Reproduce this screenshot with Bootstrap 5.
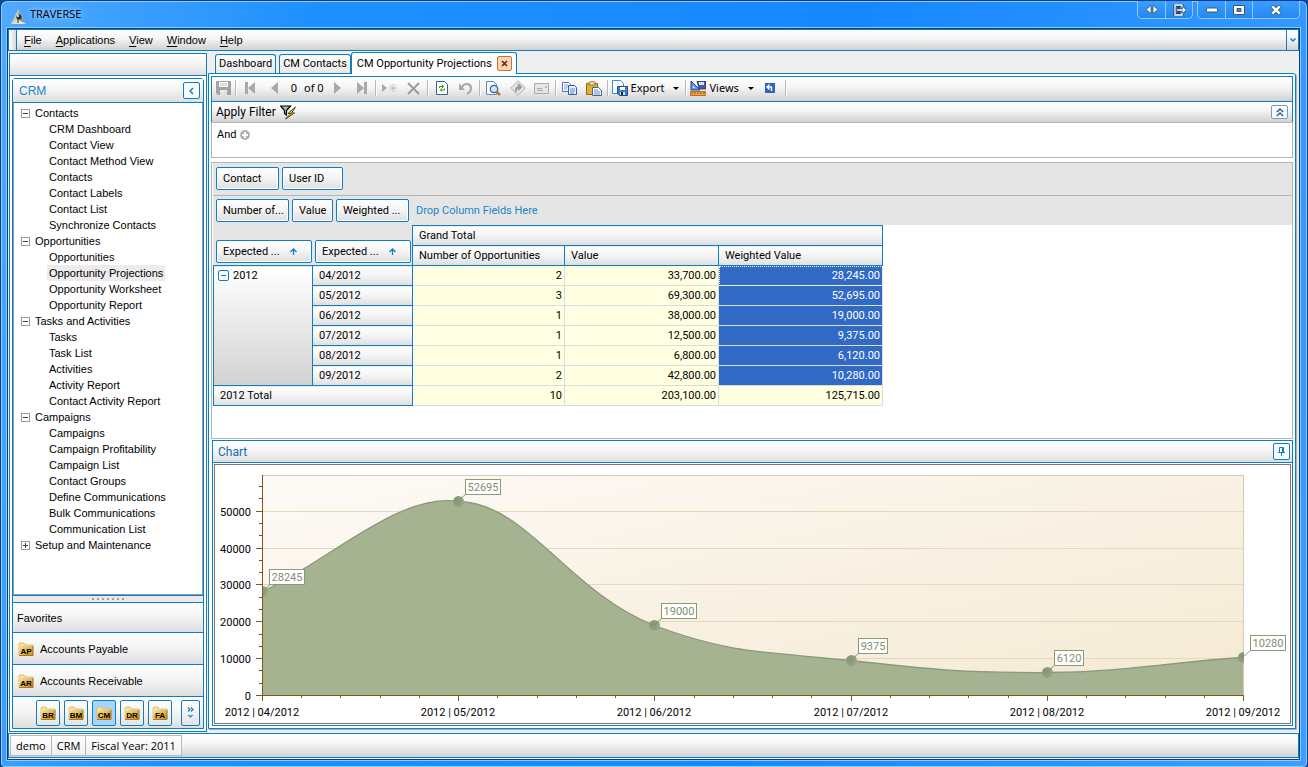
<!DOCTYPE html>
<html lang="en">
<head>
<meta charset="utf-8">
<meta name="viewport" content="width=device-width, initial-scale=1">
<title>TRAVERSE</title>
<link rel="stylesheet" href="https://cdn.jsdelivr.net/npm/bootstrap@5.3.0/dist/css/bootstrap.min.css">
<script src="https://cdn.jsdelivr.net/npm/bootstrap@5.3.0/dist/js/bootstrap.bundle.min.js"></script>
<style>
:root{--line:#0c7fc4;--soft:#b4b4b4;--grad:linear-gradient(#fff 0%,#f6f6f6 40%,#d2d2d2 100%);--grad2:linear-gradient(#fff 0%,#f5f5f5 45%,#dedede 100%)}
body{font:11px/16px Roboto,sans-serif;color:#000;background:#0b4a9a}
button,a{color:inherit;text-decoration:none;font:inherit}
button{border:0;background:none;padding:0}
svg{display:block}
.win{min-height:100vh;padding:0 7px 7px 6px;border:1px solid #0b3f88;border-radius:7px 7px 5px 5px;background:linear-gradient(100deg,#4fa9ff 0,#1e90ff 22%,#1688ff 60%,#3d9dff 100%);box-shadow:inset 0 0 0 1px #8ccaff}
.titlebar{height:27px;font:12px/26px "Open Sans",sans-serif}
.titlebar .name{text-shadow:0 0 6px #a9d6ff,0 0 8px #a9d6ff;font-size:11px}
.capgroup{height:18px;border:1px solid #8ccaff;border-top:0;border-radius:0 0 5px 5px;background:linear-gradient(#3a9dff,#2588ee)}
.capgroup button{height:17px;width:27px;display:grid;place-items:center}
.capgroup button+button{border-left:1px solid #8ccaff}
.capgroup .capclose{width:47px}
.client{background:#efefef;border:1px solid #0a3d70;padding-bottom:1px;box-shadow:0 0 0 1px #8ccaff}
.menubar{height:22px;border:1px solid var(--line);background:var(--grad);font:11px/20px "Liberation Sans",sans-serif}
.menulist{gap:14px;padding-left:7px}
.grip{width:8px;border-right:1px solid var(--line);background:linear-gradient(90deg,#fff,#d8d8d8)}
.menubar .drop{width:12px;border-left:1px solid var(--line);display:grid;place-items:center}
.menubar u{text-underline-offset:2px}
.side{width:198px;margin:2px 1px 1px;border:1px solid var(--line);background:#fff;font:11px/16px "Liberation Sans",sans-serif}
.side .strip{height:22px;border-bottom:1px solid var(--line);background:var(--grad2)}
.side-body{padding:2px}
.nav-panel{border:1px solid var(--line);border-radius:3px 3px 0 0}
.nav-head{height:24px;border-bottom:1px solid var(--line);background:var(--grad2);color:#1b86c8;font-size:12px;padding:0 3px 0 6px}
.sqbtn{width:17px;height:17px;border:1px solid var(--line);border-radius:2px;background:#f8fbfd;display:grid;place-items:center}
.sqbtn.pale{border-color:#7d9cc2;height:14px}
.tree{border:1px solid #8c9aa8;border-top:0;padding:2px 0 0 7px}
.tree ul{margin:0;padding:0;list-style:none}
.tree li>ul{padding-left:26px}
.tree li a{display:inline-block;padding:0 2px;height:16px;line-height:16px}
.tree li .group{gap:5px;height:16px}
.tree .on{background:#ececec}
.pm{width:9px;height:9px;border:1px solid #9a9a9a;display:grid;place-items:center}
.split{height:7px;gap:3px;border-top:1px solid var(--line);background:#e9e9e9}
.split i{width:2px;height:2px;background:#a4a4a4}
.navrow{border-top:1px solid var(--line);height:32px;background:var(--grad2);padding:0 5px;gap:6px;width:100%;text-align:left}
.navrow.fav{height:30px;padding-left:4px}
.navrow.mods{padding:0 3px;gap:4px}
.modbtn{width:24px;height:26px;border:1px solid var(--line);border-radius:2px;background:linear-gradient(#fff,#e4e4e4);display:grid;place-items:center}
.modbtn.on{background:#a8d4fb}
.modbtn.more{width:19px;margin-left:5px}
.docs{min-width:0;margin-right:3px}
.tabs{height:22px;padding-left:7px}
.doc-tab{height:19px;border:1px solid var(--line);border-bottom:0;border-radius:3px 3px 0 0;background:linear-gradient(#fff,#e8e8e8);padding:0 3px;margin-right:3px}
.doc-tab.wide{margin-right:0}
.doc-tab.on{height:22px;margin-bottom:-1px;background:#fff;position:relative;padding:0 4px 0 5px;gap:5px}
.closex{width:15px;height:15px;border:1px solid #c8733a;border-radius:2px;background:#fbd3b4;display:grid;place-items:center}
.docbox{border:1px solid var(--line);border-radius:0 3px 0 0;background:#fff;padding:2px;box-shadow:1px 1px 1px #aaa}
.tools{height:25px;border:1px solid var(--line);border-bottom:0;padding-bottom:2px;background:var(--grad);font:12px/22px "Noto Sans",sans-serif}
.ib{width:24px;height:22px;display:grid;place-items:center}
.ib.narrow{width:22px}
.vr2{width:2px;height:16px;margin:0 1px;border-left:1px solid #b8b8b8;border-right:1px solid #fff}
.rec{width:16px;border:0;background:none;padding:0;text-align:center;font-size:11px}
.rectotal{font-size:11px;padding:0 2px}
.wbtn{height:22px;font-size:11px;gap:3px;padding:0 2px}
.wbtn .caret{margin:0 3px 0 6px}
.filterbar{height:21px;border:1px solid var(--line);border-bottom:0;background:var(--grad);font:12px/19px Roboto,sans-serif;padding:0 4px}
.filterbox{height:36px;border:1px solid var(--soft);padding:4px 5px;background:#fff}
.pivot{border:1px solid var(--soft);margin-top:4px;background:#fff;min-height:277px;padding-left:1px}
.zone{background:#e5e5e5;height:32px;padding:4px 3px 0;gap:3px}
.zone.filters{border-bottom:1px solid var(--soft);height:33px}
.zone.cols{height:29px;padding-top:3px}
.fld{height:23px;border:1px solid var(--line);border-radius:2px;background:var(--grad2);box-shadow:inset 0 0 0 1px #fff;padding:0 6px;text-align:left;white-space:nowrap}
.w-a{width:63px}.w-b{width:61px}.w-c{width:73px}.w-d{width:41px}.w-e{width:96px}
.drophint{color:#1b86c8;line-height:23px;padding-left:4px}
.pv{width:670px;table-layout:fixed;border-collapse:collapse;line-height:19px}
.pv th,.pv td{height:20px;padding:0 2px;border:1px solid #dcdce0}
.pv th{font-weight:400;border-color:var(--line);background:var(--grad2);padding:0 6px;text-align:left}
.pv th.zonecell{background:#e5e5e5;border-color:#e5e5e5 var(--line) var(--line) #e5e5e5;padding:0 0 2px 2px;vertical-align:bottom}
.pv th.yr{vertical-align:top;background:linear-gradient(#fff,#d2d2d2);padding-left:4px}
.pv td{background:#ffffe1;text-align:right}
.pv td.sel{background:#316ac5;color:#fff}
.pv td.focus{outline:1px dotted #fff;outline-offset:-1px}
.pv .pm{border-color:var(--line);border-radius:2px;width:11px;height:11px}
.pair{gap:3px}
.pair .fld{gap:10px}
.chartpanel{border:1px solid var(--line);margin:1px 0 0 1px;padding:1px;background:#fff}
.charthead{height:22px;border-bottom:1px solid var(--line);background:var(--grad2);color:#0f6fb4;margin:-1px -1px 1px;padding:0 2px 0 5px;font-size:12px}
.chartframe{border:1px solid #8a7468}
.chartframe svg{width:100%;height:auto}
.status{height:25px;border:1px solid var(--line);background:var(--grad);padding:1px;font:11px/20px "Open Sans",sans-serif}
.status span{border:1px solid #b8b8b8;background:linear-gradient(#fff,#eee);padding:0 5px;height:21px;margin-right:-1px;line-height:19px}
</style>
</head>
<body>
<svg width="0" height="0" class="position-absolute" aria-hidden="true">
<defs>
<linearGradient id="gold" x1="0" y1="0" x2="1" y2="1"><stop offset="0" stop-color="#fbe48c"/><stop offset="1" stop-color="#c98a18"/></linearGradient>
<radialGradient id="dot" cx=".35" cy=".4" r=".7"><stop offset="0" stop-color="#83926f"/><stop offset="1" stop-color="#9aa888"/></radialGradient>
<symbol id="folder" viewBox="0 0 16 14"><path d="M1 4V2l1-1h4l1 2h8v10H1z" fill="#f2e2a6" stroke="#c8a850" stroke-width=".6"/><rect x="1" y="4" width="14" height="9.500" fill="url(#gold)"/><path d="M15 4v9.500H1" fill="none" stroke="#9a6a14" stroke-width=".8"/></symbol>
</defs>
</svg>
<div class="win d-flex flex-column">
  <header class="titlebar d-flex align-items-start">
    <div class="d-flex align-items-center ps-1">
      <svg class="me-1 mt-1" width="15" height="15" viewBox="0 0 15 15"><path d="M7.500 0 15 15H0z" fill="#c9cdc6"/><path d="M7.500 0 15 15 8 11z" fill="#8b968f"/><path d="M0 15l7-4.500L15 15z" fill="#e2e0d2"/><circle cx="8" cy="8" r="2.600" fill="#2b333c"/><circle cx="7" cy="7" r="1" fill="#fff"/><path d="M7 10v4" stroke="#333"/></svg>
      <span class="name">TRAVERSE</span>
    </div>
    <div class="d-flex ms-auto gap-1">
      <div class="capgroup d-flex">
        <button aria-label="Switch"><svg width="14" height="9" viewBox="0 0 14 9"><path d="M6 .5v8L1 4.500zM8 .5v8l5-4z" fill="#fff" stroke="#456" stroke-width=".8"/></svg></button>
        <button aria-label="Exit"><svg width="13" height="12" viewBox="0 0 13 12"><path d="M9 3V1H2v10h7V9M4 4h3M4 6h8M4 8h3M10 4l2 2-2 2" fill="none" stroke="#345" stroke-width="3"/><path d="M9 3V1H2v10h7V9M4 6h8M10 4l2 2-2 2" fill="none" stroke="#fff" stroke-width="1.300"/></svg></button>
      </div>
      <div class="capgroup d-flex">
        <button aria-label="Minimize"><svg width="12" height="6" viewBox="0 0 12 6"><rect x=".5" y="1" width="11" height="4" rx="1" fill="#fff" stroke="#456"/></svg></button>
        <button aria-label="Maximize"><svg width="12" height="10" viewBox="0 0 12 10"><path fill-rule="evenodd" d="M.5.500h11v9H.5zM4 3.500h4v3H4z" fill="#fff" stroke="#456"/></svg></button>
        <button class="capclose" aria-label="Close"><svg width="12" height="10" viewBox="0 0 12 10"><path d="M2 1l8 8M10 1L2 9" stroke="#456" stroke-width="4"/><path d="M2.300 1.300l7.400 7.400M9.700 1.300L2.300 8.700" stroke="#fff" stroke-width="2.400"/></svg></button>
      </div>
    </div>
  </header>

  <div class="client d-flex flex-column flex-grow-1">
    <nav class="menubar d-flex">
      <div class="grip"></div>
      <div class="menulist d-flex flex-grow-1">
        <a href="#"><u>F</u>ile</a><a href="#"><u>A</u>pplications</a><a href="#"><u>V</u>iew</a><a href="#"><u>W</u>indow</a><a href="#"><u>H</u>elp</a>
      </div>
      <button class="drop" aria-label="Toolbar options"><svg width="6" height="4" viewBox="0 0 6 4"><path d="M.5.500 3 3 5.500.500" fill="none" stroke="#0c7fc4" stroke-width="1.400"/></svg></button>
    </nav>

    <div class="d-flex flex-grow-1">
      <aside class="side d-flex flex-column flex-shrink-0">
        <div class="strip"></div>
        <div class="side-body d-flex flex-column flex-grow-1">
        <div class="nav-panel d-flex flex-column flex-grow-1">
          <div class="nav-head d-flex align-items-center justify-content-between">CRM
            <button class="sqbtn" aria-label="Collapse"><svg width="5" height="8" viewBox="0 0 5 8"><path d="M4 1 1 4l3 3" fill="none" stroke="#0c7fc4" stroke-width="1.500"/></svg></button>
          </div>
          <div class="tree flex-grow-1">
            <ul>
              <li><div class="group d-flex align-items-center"><button class="pm" aria-label="Collapse"><svg width="5" height="1"><rect width="5" height="1" fill="#345"/></svg></button>Contacts</div>
                <ul><li><a href="#">CRM Dashboard</a></li><li><a href="#">Contact View</a></li><li><a href="#">Contact Method View</a></li><li><a href="#">Contacts</a></li><li><a href="#">Contact Labels</a></li><li><a href="#">Contact List</a></li><li><a href="#">Synchronize Contacts</a></li></ul></li>
              <li><div class="group d-flex align-items-center"><button class="pm" aria-label="Collapse"><svg width="5" height="1"><rect width="5" height="1" fill="#345"/></svg></button>Opportunities</div>
                <ul><li><a href="#">Opportunities</a></li><li><a href="#" class="on">Opportunity Projections</a></li><li><a href="#">Opportunity Worksheet</a></li><li><a href="#">Opportunity Report</a></li></ul></li>
              <li><div class="group d-flex align-items-center"><button class="pm" aria-label="Collapse"><svg width="5" height="1"><rect width="5" height="1" fill="#345"/></svg></button>Tasks and Activities</div>
                <ul><li><a href="#">Tasks</a></li><li><a href="#">Task List</a></li><li><a href="#">Activities</a></li><li><a href="#">Activity Report</a></li><li><a href="#">Contact Activity Report</a></li></ul></li>
              <li><div class="group d-flex align-items-center"><button class="pm" aria-label="Collapse"><svg width="5" height="1"><rect width="5" height="1" fill="#345"/></svg></button>Campaigns</div>
                <ul><li><a href="#">Campaigns</a></li><li><a href="#">Campaign Profitability</a></li><li><a href="#">Campaign List</a></li><li><a href="#">Contact Groups</a></li><li><a href="#">Define Communications</a></li><li><a href="#">Bulk Communications</a></li><li><a href="#">Communication List</a></li></ul></li>
              <li><div class="group d-flex align-items-center"><button class="pm" aria-label="Expand"><svg width="5" height="5"><path d="M0 2h5v1H0zM2 0h1v5H2z" fill="#345"/></svg></button>Setup and Maintenance</div></li>
            </ul>
          </div>
          <div class="split d-flex justify-content-center align-items-center"><i></i><i></i><i></i><i></i><i></i><i></i><i></i></div>
          <button class="navrow fav d-flex align-items-center">Favorites</button>
          <button class="navrow d-flex align-items-center"><svg width="16" height="14"><use href="#folder"/><text x="8" y="12" text-anchor="middle" font-family="Liberation Sans" font-weight="700" font-size="8">AP</text></svg>Accounts Payable</button>
          <button class="navrow d-flex align-items-center"><svg width="16" height="14"><use href="#folder"/><text x="8" y="12" text-anchor="middle" font-family="Liberation Sans" font-weight="700" font-size="8">AR</text></svg>Accounts Receivable</button>
          <div class="navrow mods d-flex align-items-center justify-content-end">
            <button class="modbtn"><svg width="16" height="14"><use href="#folder"/><text x="8" y="12" text-anchor="middle" font-family="Liberation Sans" font-weight="700" font-size="8">BR</text></svg></button>
            <button class="modbtn"><svg width="16" height="14"><use href="#folder"/><text x="8" y="12" text-anchor="middle" font-family="Liberation Sans" font-weight="700" font-size="8">BM</text></svg></button>
            <button class="modbtn on"><svg width="16" height="14"><use href="#folder"/><text x="8" y="12" text-anchor="middle" font-family="Liberation Sans" font-weight="700" font-size="8">CM</text></svg></button>
            <button class="modbtn"><svg width="16" height="14"><use href="#folder"/><text x="8" y="12" text-anchor="middle" font-family="Liberation Sans" font-weight="700" font-size="8">DR</text></svg></button>
            <button class="modbtn"><svg width="16" height="14"><use href="#folder"/><text x="8" y="12" text-anchor="middle" font-family="Liberation Sans" font-weight="700" font-size="8">FA</text></svg></button>
            <button class="modbtn more" aria-label="More"><svg width="7" height="12" viewBox="0 0 7 12"><path d="M1 .5l2 2-2 2M4 .5l2 2-2 2M1.500 8l2 2 2-2" fill="none" stroke="#0c7fc4" stroke-width="1.200"/></svg></button>
          </div>
        </div>
        </div>
      </aside>

      <main class="docs d-flex flex-column flex-grow-1">
        <div class="tabs d-flex align-items-end">
          <button class="doc-tab">Dashboard</button><button class="doc-tab wide">CM Contacts</button>
          <div class="doc-tab on d-flex align-items-center"><span>CM Opportunity Projections</span><button class="closex" aria-label="Close tab"><svg width="7" height="7" viewBox="0 0 7 7"><path d="M1 1l5 5M6 1 1 6" stroke="#5a2a10" stroke-width="1.600"/></svg></button></div>
        </div>
        <div class="docbox d-flex flex-column flex-grow-1 mb-1">
          <div class="tools d-flex align-items-center">
            <button class="ib narrow" aria-label="Save"><svg width="15" height="14" viewBox="0 0 15 14"><path fill-rule="evenodd" d="M0 0h15v14H2L0 12zM3 1v5h9V1zM4 9v5h7V9z" fill="#a3a3a3"/><path d="M4 2h7v3H4zM8 10h2v3H8z" fill="#ddd"/></svg></button>
            <span class="vr2"></span>
            <button class="ib" aria-label="First"><svg width="10" height="12"><path d="M0 0h3v12H0zM10 0v12L3 6z" fill="#a9a9a9"/></svg></button>
            <button class="ib" aria-label="Previous"><svg width="7" height="12"><path d="M7 0v12L0 6z" fill="#a9a9a9"/></svg></button>
            <input class="rec" value="0" aria-label="Record"><span class="rectotal">of 0</span>
            <button class="ib" aria-label="Next"><svg width="7" height="12"><path d="M0 0v12l7-6z" fill="#a9a9a9"/></svg></button>
            <button class="ib" aria-label="Last"><svg width="10" height="12"><path d="M7 0h3v12H7zM0 0v12l7-6z" fill="#a9a9a9"/></svg></button>
            <span class="vr2"></span>
            <button class="ib" aria-label="New"><svg width="15" height="10" viewBox="0 0 15 10"><path d="M0 1v8l5-4z" fill="#a9a9a9"/><path d="M7 5h8M11 1v8M8 2l6 6M14 2 8 8" stroke="#b5b5b5" stroke-dasharray="1.500 .7"/></svg></button>
            <button class="ib" aria-label="Delete"><svg width="13" height="13"><path d="M1 1l11 11M12 1 1 12" stroke="#9c9c9c" stroke-width="2"/></svg></button>
            <span class="vr2"></span>
            <button class="ib" aria-label="Refresh"><svg width="12" height="14" viewBox="0 0 12 14"><path d="M.5.500h8l3 3v10H.5z" fill="#fff" stroke="#3f5f8f"/><path d="M3.500 7V5.500h4M8.500 7.500V9h-4M6 4l1.700 1.500L6 7M6 7.500 4.300 9 6 10.500" fill="none" stroke="#3e8e20"/></svg></button>
            <button class="ib" aria-label="Undo"><svg width="13" height="13" viewBox="0 0 13 13"><path d="M3 5c3-5 9-3 9 1 0 3-2 5-4 6" fill="none" stroke="#aaa" stroke-width="2.200"/><path d="M0 1v7h6z" fill="#aaa"/></svg></button>
            <span class="vr2"></span>
            <button class="ib" aria-label="Preview"><svg width="15" height="15" viewBox="0 0 15 15"><path d="M.5.500h7l3 3v10H.5z" fill="#fff" stroke="#6a86ae"/><circle cx="8" cy="8" r="3.700" fill="#cfe5fa" stroke="#2f5f9f" stroke-width="1.300"/><path d="M10.500 10.500 14 14" stroke="#b87a2a" stroke-width="2.500"/></svg></button>
            <button class="ib" aria-label="Go"><svg width="16" height="16" viewBox="0 0 16 16"><path d="M8 .7 15.300 8 8 15.300.7 8z" fill="#e4e4e4" stroke="#b0b0b0"/><path d="M6 12c-1-4 1-5 4-5M8 4l3 3-3 3" fill="none" stroke="#999" stroke-width="1.800"/></svg></button>
            <button class="ib" aria-label="Mail"><svg width="15" height="11"><path d="M.5.500h14v10H.5z" fill="#e6e6e6" stroke="#aaa"/><path d="M3 5.500h5M3 7.500h6M11.500 3.500h1v1h-1z" stroke="#aaa" fill="none"/></svg></button>
            <span class="vr2"></span>
            <button class="ib" aria-label="Copy"><svg width="15" height="13" viewBox="0 0 15 13"><path d="M.5.500h6l2 2v7h-8z" fill="#fff" stroke="#4a78c0"/><path d="M2 3h4M2 5h4M2 7h3" stroke="#7ba3dc"/><path d="M6.500 3.500h6l2 2v7h-8z" fill="#e8f2ff" stroke="#2d5cab"/><path d="M8 7h5M8 9h5M8 11h4" stroke="#5b8ad0"/></svg></button>
            <button class="ib" aria-label="Paste"><svg width="16" height="15" viewBox="0 0 16 15"><path d="M.5 2.500h11v11H.5z" fill="#e0ae3c" stroke="#91681a"/><path d="M3 1h2l1-1 1 1h2v3H3z" fill="#f4e39a" stroke="#91681a" stroke-width=".8"/><path d="M6.500 6.500h6l3 3v5h-9z" fill="#f4f8ff" stroke="#4d6588"/><path d="M8 9h4M8 11h6M8 13h6" stroke="#6d8fc0"/></svg></button>
            <span class="vr2"></span>
            <button class="wbtn d-flex align-items-center"><svg width="16" height="16" viewBox="0 0 16 16"><path d="M.5.500h8l3 3v10H.5z" fill="#fff" stroke="#3c8ad8"/><path d="M5.500 6.500h10v9h-8l-2-2z" fill="#3d7fc6" stroke="#1c4f8c"/><path d="M8 7h5v3H8z" fill="#fff"/><path d="M8 12h5v3H8z" fill="#dde"/><path d="M9 12h2v3H9z" fill="#223"/></svg>Export<svg class="caret" width="6" height="3"><path d="M0 0h6L3 3z"/></svg></button>
            <span class="vr2"></span>
            <button class="wbtn d-flex align-items-center"><svg width="16" height="15" viewBox="0 0 16 15"><path d="M1 0v9h9z" fill="#5f96e8" stroke="#1c3f9c"/><path d="M3 5v2h2z" fill="#fff"/><path d="M7 0h9v8H9z" fill="#4a55a0" stroke="#2b347a" stroke-width=".8"/><path d="M9 1h5v3H9z" fill="#d8e0ff"/><path d="M0 10.500h16v4H0z" fill="#f3a33a" stroke="#a6601a" stroke-width=".8"/><path d="M2 11v2M5 11v2M8 11v2M11 11v2M14 11v2" stroke="#7a4510" stroke-width=".8"/></svg>Views<svg class="caret" width="6" height="3"><path d="M0 0h6L3 3z"/></svg></button>
            <button class="ib narrow" aria-label="Reset view"><svg width="10" height="10" viewBox="0 0 10 10"><path d="M0 0h10v10H0z" fill="#2c64c8"/><path d="M2 4h4.500v4M4.500 1.500 2 4l2.500 2.500" fill="none" stroke="#fff" stroke-width="1.400"/></svg></button>
            <span class="vr2 ms-1"></span>
          </div>
          <div class="filterbar d-flex align-items-center justify-content-between">
            <div class="d-flex align-items-center gap-1">Apply Filter <svg width="17" height="15" viewBox="0 0 17 15"><path d="M.5 1h10L6.500 5.500V10l-2-1.500v-3z" fill="#9fb8b8" stroke="#000" stroke-width="1.200"/><path d="M15.500 2 8 8.500h3L5.500 14l9-6h-3z" fill="#f5e423" stroke="#3a3300" stroke-width=".9"/></svg></div>
            <button class="sqbtn pale" aria-label="Collapse filter"><svg width="8" height="9" viewBox="0 0 8 9"><path d="M.8 4 4 1l3.200 3M.8 8 4 5l3.200 3" fill="none" stroke="#35608f" stroke-width="1.500"/></svg></button>
          </div>
          <div class="filterbox"><div class="d-flex align-items-center gap-1"><a href="#">And</a>
            <button aria-label="Add condition"><svg width="10" height="10" viewBox="0 0 10 10"><circle cx="5" cy="5" r="5" fill="#b2b2b2"/><path d="M5 2v6M2 5h6" stroke="#fff" stroke-width="2"/></svg></button></div>
          </div>

          <section class="pivot">
            <div class="zone filters d-flex"><button class="fld w-a">Contact</button><button class="fld w-b">User ID</button></div>
            <div class="zone cols d-flex"><button class="fld w-c">Number of...</button><button class="fld w-d">Value</button><button class="fld w-c">Weighted ...</button><span class="drophint">Drop Column Fields Here</span></div>
            <table class="pv">
              <colgroup><col style="width:99px"><col style="width:100px"><col style="width:152px"><col style="width:154px"><col style="width:164px"></colgroup>
              <thead>
              <tr><th class="zonecell" rowspan="2" colspan="2"><div class="pair d-flex">
                <button class="fld w-e d-flex align-items-center">Expected ... <svg width="7" height="7" viewBox="0 0 7 7"><path d="M3.500 7V1M.5 4l3-3 3 3" fill="none" stroke="#0c7fc4" stroke-width="1.300"/></svg></button>
                <button class="fld w-e d-flex align-items-center">Expected ... <svg width="7" height="7" viewBox="0 0 7 7"><path d="M3.500 7V1M.5 4l3-3 3 3" fill="none" stroke="#0c7fc4" stroke-width="1.300"/></svg></button></div></th>
                <th colspan="3">Grand Total</th></tr>
              <tr><th>Number of Opportunities</th><th>Value</th><th>Weighted Value</th></tr>
              </thead>
              <tbody>
              <tr><th class="yr" rowspan="6"><div class="d-flex align-items-center gap-1"><button class="pm" aria-label="Collapse"><svg width="5" height="1"><rect width="5" height="1" fill="#0c7fc4"/></svg></button>2012</div></th><th>04/2012</th><td>2</td><td>33,700.00</td><td class="sel focus">28,245.00</td></tr>
              <tr><th>05/2012</th><td>3</td><td>69,300.00</td><td class="sel">52,695.00</td></tr>
              <tr><th>06/2012</th><td>1</td><td>38,000.00</td><td class="sel">19,000.00</td></tr>
              <tr><th>07/2012</th><td>1</td><td>12,500.00</td><td class="sel">9,375.00</td></tr>
              <tr><th>08/2012</th><td>1</td><td>6,800.00</td><td class="sel">6,120.00</td></tr>
              <tr><th>09/2012</th><td>2</td><td>42,800.00</td><td class="sel">10,280.00</td></tr>
              <tr><th colspan="2">2012 Total</th><td>10</td><td>203,100.00</td><td>125,715.00</td></tr>
              </tbody>
            </table>
          </section>

          <section class="chartpanel">
            <div class="charthead d-flex align-items-center justify-content-between">Chart
              <button class="sqbtn" aria-label="Pin"><svg width="7" height="9" viewBox="0 0 7 9"><path d="M1.500.500h4v5h-4zM0 5.500h7M3.500 6v3M4.500 1v4" fill="none" stroke="#0c7fc4"/></svg></button>
            </div>
            <div class="chartframe">
              <svg viewBox="0 0 1075 258" font-family="Roboto, sans-serif" font-size="11" role="img" aria-label="Weighted value by month">
                <defs>
                  <linearGradient id="wall" x1="0" y1="0" x2="1" y2="1"><stop offset="0" stop-color="#fdfaf6"/><stop offset="1" stop-color="#f4e9d2"/></linearGradient>
                  <clipPath id="plot"><rect x="47" y="10" width="982" height="221"/></clipPath>
                </defs>
                <rect x="47.500" y="10.500" width="981" height="220" fill="url(#wall)" stroke="#d5cbb4"/>
                <path d="M48 46.500h980M48 83.500h980M48 119.500h980M48 156.500h980M48 193.500h980" stroke="#e4d9bd"/>
                <g clip-path="url(#plot)">
                  <path d="M47 126.500C112 98 183 27 243.500 36.500C312 38 352 126 439.500 160.500C517 190 558 187 636 195.500C714 204.500 754 208 832 207.500C910 207 956 197 1028 192.500V230H47z" fill="#a5b391"/>
                  <path d="M47 126.500C112 98 183 27 243.500 36.500C312 38 352 126 439.500 160.500C517 190 558 187 636 195.500C714 204.500 754 208 832 207.500C910 207 956 197 1028 192.500" fill="none" stroke="#8a987b" stroke-width="1.300"/>
                  <g fill="url(#dot)"><circle cx="47.500" cy="126.500" r="5.500"/><circle cx="243.500" cy="36.500" r="5.500"/><circle cx="439.500" cy="160.500" r="5.500"/><circle cx="636.500" cy="195.500" r="5.500"/><circle cx="832.500" cy="207.500" r="5.500"/><circle cx="1028.500" cy="192.500" r="5.500"/></g>
                </g>
                <path d="M47.500 10v226M41 230.500h988M41 46.500h6M41 83.500h6M41 119.500h6M41 156.500h6M41 193.500h6M44 21.500h3M44 33.500h3M44 58.500h3M44 70.500h3M44 95.500h3M44 107.500h3M44 132.500h3M44 144.500h3M44 169.500h3M44 181.500h3M44 205.500h3M44 218.500h3" stroke="#7a5a1a" fill="none"/>
                <path d="M243.500 231v5M439.500 231v5M636.500 231v5M832.500 231v5M1028.500 231v5M86.500 231v2M125.500 231v2M165.500 231v2M204.500 231v2M282.500 231v2M322.500 231v2M361.500 231v2M400.500 231v2M479.500 231v2M518.500 231v2M557.500 231v2M596.500 231v2M675.500 231v2M714.500 231v2M753.500 231v2M793.500 231v2M871.500 231v2M910.500 231v2M950.500 231v2M989.500 231v2" stroke="#7a5a1a"/>
                <g text-anchor="end"><text x="36" y="51">50000</text><text x="36" y="88">40000</text><text x="36" y="124">30000</text><text x="36" y="161">20000</text><text x="36" y="198">10000</text><text x="36" y="235">0</text></g>
                <g text-anchor="middle"><text x="47" y="251">2012 | 04/2012</text><text x="243" y="251">2012 | 05/2012</text><text x="439" y="251">2012 | 06/2012</text><text x="636" y="251">2012 | 07/2012</text><text x="832" y="251">2012 | 08/2012</text><text x="1028" y="251">2012 | 09/2012</text></g>
                <path d="M47 126l8-6M243 36l8-7M439 160l8-7M636 195l8-7M832 207l8-7M1028 192l8-7" stroke="#8a997a"/>
                <g fill="#fff" stroke="#8a997a"><rect x="54.500" y="104.500" width="35" height="15"/><rect x="250.500" y="14.500" width="35" height="15"/><rect x="446.500" y="138.500" width="35" height="15"/><rect x="643.500" y="173.500" width="29" height="15"/><rect x="839.500" y="185.500" width="29" height="15"/><rect x="1035.500" y="170.500" width="35" height="15"/></g>
                <g fill="#7f8e6f" text-anchor="middle"><text x="72" y="116">28245</text><text x="268" y="26">52695</text><text x="464" y="150">19000</text><text x="658" y="185">9375</text><text x="854" y="197">6120</text><text x="1053" y="182">10280</text></g>
              </svg>
            </div>
          </section>
        </div>
      </main>
    </div>
    <footer class="status d-flex"><span>demo</span><span>CRM</span><span>Fiscal Year: 2011</span></footer>
  </div>
</div>
</body>
</html>
